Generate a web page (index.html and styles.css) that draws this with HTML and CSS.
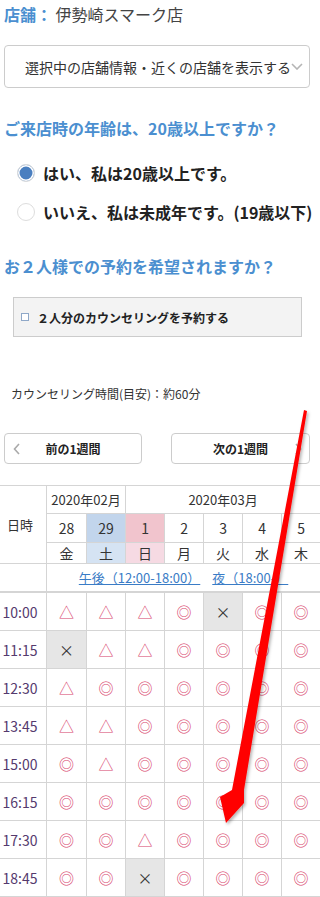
FILE: index.html
```html
<!DOCTYPE html>
<html lang="ja">
<head>
    <meta charset="UTF-8">
    <meta name="viewport" content="width=device-width, initial-scale=1.0">
    <title>カウンセリング予約</title>
    <link rel="stylesheet" href="styles.css">
</head>
<body>
    <div class="shop"><span class="shop-label">店舗：</span> 伊勢崎スマーク店</div>

    <div class="shop-select">
        選択中の店舗情報・近くの店舗を表示する
        <svg class="select-arrow" viewBox="0 0 12 7"><path d="M1 1l5 5 5-5" fill="none" stroke="#b5b5b5" stroke-width="1.6"/></svg>
    </div>

    <h2 class="question">ご来店時の年齢は、20歳以上ですか？</h2>
    <div class="radios">
        <label class="radio"><span class="radio-mark checked"></span>はい、私は20歳以上です。</label>
        <label class="radio"><span class="radio-mark"></span>いいえ、私は未成年です。(19歳以下)</label>
    </div>

    <h2 class="question q-pair">お２人様での予約を希望されますか？</h2>
    <div class="pair-box"><span class="checkbox"></span>２人分のカウンセリングを予約する</div>

    <p class="duration">カウンセリング時間(目安)：約60分</p>

    <div class="week-nav">
        <button class="week-btn">
            <svg class="chev" viewBox="0 0 7 12"><path d="M6 1L1.5 6 6 11" fill="none" stroke="#aaa" stroke-width="1.6"/></svg>
            <span>前の1週間</span><span></span>
        </button>
        <button class="week-btn next">
            <span></span><span>次の1週間</span>
            <svg class="chev" viewBox="0 0 7 12"><path d="M1 1l4.5 5L1 11" fill="none" stroke="#aaa" stroke-width="1.6"/></svg>
        </button>
    </div>

    <div class="calendar-wrap">
        <table class="calendar">
            <colgroup>
                <col class="c-time"><col class="c-first"><col class="c-day"><col class="c-day"><col class="c-day"><col class="c-day"><col class="c-day"><col class="c-day">
            </colgroup>
            <tr class="r-month">
                <td class="time" rowspan="3">日時</td>
                <td colspan="2">2020年02月</td>
                <td colspan="5">2020年03月</td>
            </tr>
            <tr class="r-date">
                <td>28</td><td class="sat-date">29</td><td class="sun-date">1</td><td>2</td><td>3</td><td>4</td><td>5</td>
            </tr>
            <tr class="r-week">
                <td>金</td><td class="sat-day">土</td><td class="sun-day">日</td><td>月</td><td>火</td><td>水</td><td>木</td>
            </tr>
            <tr class="r-links">
                <td></td>
                <td colspan="7"><a href="#">午後（12:00-18:00）</a><a href="#">夜（18:00-）</a></td>
            </tr>
            <tr class="slot"><td class="time">10:00</td><td class="few">△</td><td class="few">△</td><td class="few">△</td><td class="ok">◎</td><td class="full">×</td><td class="ok">◎</td><td class="ok">◎</td></tr>
            <tr class="slot"><td class="time">11:15</td><td class="full">×</td><td class="few">△</td><td class="few">△</td><td class="ok">◎</td><td class="ok">◎</td><td class="ok">◎</td><td class="ok">◎</td></tr>
            <tr class="slot"><td class="time">12:30</td><td class="few">△</td><td class="ok">◎</td><td class="ok">◎</td><td class="ok">◎</td><td class="ok">◎</td><td class="ok">◎</td><td class="ok">◎</td></tr>
            <tr class="slot"><td class="time">13:45</td><td class="few">△</td><td class="few">△</td><td class="ok">◎</td><td class="ok">◎</td><td class="ok">◎</td><td class="ok">◎</td><td class="ok">◎</td></tr>
            <tr class="slot"><td class="time">15:00</td><td class="ok">◎</td><td class="few">△</td><td class="ok">◎</td><td class="ok">◎</td><td class="ok">◎</td><td class="ok">◎</td><td class="ok">◎</td></tr>
            <tr class="slot"><td class="time">16:15</td><td class="ok">◎</td><td class="ok">◎</td><td class="ok">◎</td><td class="ok">◎</td><td class="ok">◎</td><td class="ok">◎</td><td class="ok">◎</td></tr>
            <tr class="slot"><td class="time">17:30</td><td class="ok">◎</td><td class="ok">◎</td><td class="few">△</td><td class="ok">◎</td><td class="ok">◎</td><td class="ok">◎</td><td class="ok">◎</td></tr>
            <tr class="slot"><td class="time">18:45</td><td class="ok">◎</td><td class="ok">◎</td><td class="full">×</td><td class="ok">◎</td><td class="ok">◎</td><td class="ok">◎</td><td class="ok">◎</td></tr>
        </table>
    </div>

    <!-- red annotation arrow drawn over the screenshot -->
    <svg class="annotation" viewBox="0 0 320 897">
        <defs>
            <filter id="shadow" x="-20%" y="-5%" width="140%" height="110%">
                <feDropShadow dx="1.5" dy="2" stdDeviation="1.5" flood-color="#000" flood-opacity="0.3"/>
            </filter>
        </defs>
        <polygon points="304,410 307,411 244,790 244,803 226,823 220,797 232,790" fill="#ff0000" filter="url(#shadow)"/>
    </svg>
</body>
</html>
```

FILE: styles.css
```css
body { margin: 0; font-family: "Noto Sans CJK JP", "Noto Sans", sans-serif; color: #333; background: #fff; position: relative; overflow-x: hidden; }

.shop { margin: 0 4px; height: 28px; line-height: 28px; font-size: 16px; color: #444; white-space: nowrap; }
.shop-label { color: #4b8fd0; font-weight: bold; }

.shop-select { margin: 17px 10px 0 4px; height: 43px; box-sizing: border-box; border: 1px solid #ccc; border-radius: 4px; display: flex; align-items: center; padding-left: 20px; font-size: 14px; color: #333; white-space: nowrap; }
.select-arrow { width: 12px; height: 7px; flex: none; }

.question { margin: 28px 4px 0; font-size: 16px; line-height: 24px; font-weight: bold; color: #4b8fd0; white-space: nowrap; }
.q-pair { margin-top: 23px; }

.radios { margin: 13px 0 0 17px; }
.radio { display: flex; align-items: center; height: 39px; font-size: 16px; font-weight: bold; color: #222; white-space: nowrap; }
.radio-mark { width: 18px; height: 18px; box-sizing: border-box; border: 1px solid #ddd; border-radius: 50%; margin-right: 8px; background: #fff; flex: none; }
.radio-mark.checked { background: #4a7fc0; box-shadow: inset 0 0 0 1.5px #fff; }

.pair-box { margin: 19px 18px 0 13px; height: 40px; box-sizing: border-box; border: 1px solid #ccc; background: #f3f3f3; display: flex; align-items: center; padding-left: 7px; font-size: 12px; font-weight: bold; color: #222; white-space: nowrap; }
.checkbox { width: 6px; height: 6px; border: 1px solid #8fa8c8; background: #fff; margin-right: 8px; flex: none; }

.duration { margin: 47px 0 0 11px; font-size: 12px; line-height: 20px; color: #333; }

.week-nav { display: flex; justify-content: space-between; margin: 29px 10px 0 4px; }
.week-btn { width: 138px; height: 31px; box-sizing: border-box; border: 1px solid #ccc; border-radius: 4px; background: #fff; display: grid; grid-template-columns: 22px 1fr 22px; align-items: center; justify-items: center; padding: 0; font-family: inherit; font-size: 12px; font-weight: bold; color: #222; }
.week-btn.next { width: 139px; }
.chev { width: 7px; height: 12px; }

.calendar-wrap { margin-top: 21px; overflow: hidden; }
.calendar { border-collapse: separate; border-spacing: 0; table-layout: fixed; width: 321px; border-top: 1px solid #d5d5d5; font-size: 13px; text-align: center; color: #333; }
.calendar td { border-right: 1px solid #d5d5d5; border-bottom: 1px solid #d5d5d5; padding: 0; box-sizing: border-box; }
.c-time { width: 47px; }
.c-first { width: 40px; }
.c-day { width: 39px; }
.r-month td { height: 28px; }
.r-date td { height: 29px; font-size: 14px; }
.r-week td { height: 19px; font-size: 14px; }
.r-links td { height: 29px; border-bottom-width: 2px; }
.r-links a { color: #3a7cc6; margin: 0 6px; }
.slot td { height: 38px; font-size: 15px; }
.calendar td.time { padding-right: 6px; font-size: 13px; }
.slot td.time { color: #553a6e; font-size: 14px; }
.sat-date { background: #c2d5ec; }
.sat-day { background: #d5e3f3; }
.sun-date { background: #f1c4cd; }
.sun-day { background: #f6dae3; }
.ok, .few { color: #d8436c; }
.full { background: #e6e6e6; color: #333; }

.annotation { position: absolute; left: 0; top: 0; width: 320px; height: 897px; pointer-events: none; }
```
